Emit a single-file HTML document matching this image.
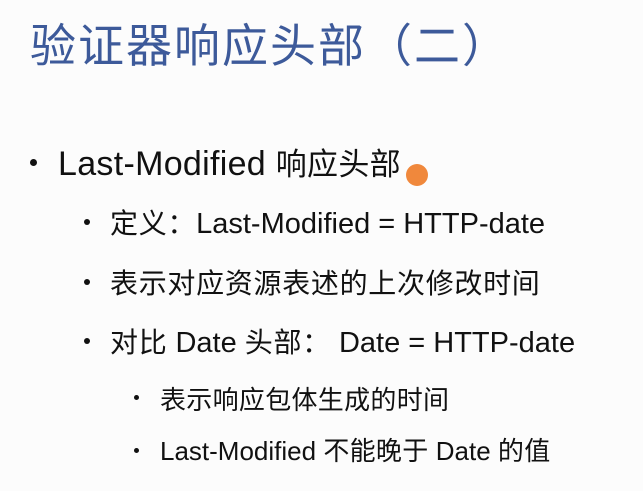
<!DOCTYPE html>
<html><head><meta charset="utf-8"><style>
body{margin:0;width:643px;height:491px;background:#fcfcfc;overflow:hidden;position:relative;font-family:"Liberation Sans","Noto Sans CJK SC",sans-serif;color:#111}
.t{position:absolute;white-space:nowrap;line-height:1}
.title{left:30px;top:23px;font-size:46px;color:#3d5a9a;letter-spacing:2px}
.b{position:absolute;border-radius:50%;background:#111}
.l2{font-size:29px;left:110px}
.l2 .c{font-size:28px;letter-spacing:0.7px}
.l3{font-size:26px;left:160px;letter-spacing:0px}
.l3 .c{font-size:26px;letter-spacing:0.3px}
</style></head><body>
<div class="t title">验证器响应头部（二）</div>

<div class="b" style="left:30px;top:159px;width:7px;height:7px"></div>
<div class="t" style="left:58px;top:147px;font-size:34px;letter-spacing:0.3px">Last-Modified <span style="font-size:31px">响应头部</span></div>
<div style="position:absolute;left:406px;top:164px;width:22px;height:22px;border-radius:50%;background:#f0883c"></div>

<div class="b" style="left:84px;top:219px;width:6px;height:6px"></div>
<div class="t l2" style="top:210px"><span class="c">定义：</span>Last-Modified = HTTP-date</div>
<div class="b" style="left:84px;top:279px;width:6px;height:6px"></div>
<div class="t l2" style="top:270px"><span class="c">表示对应资源表述的上次修改时间</span></div>
<div class="b" style="left:84px;top:338px;width:6px;height:6px"></div>
<div class="t l2" style="top:329px"><span class="c">对比</span> Date <span class="c">头部：</span>&nbsp;Date = HTTP-date</div>

<div class="b" style="left:134px;top:395px;width:5px;height:5px"></div>
<div class="t l3" style="top:387px"><span class="c">表示响应包体生成的时间</span></div>
<div class="b" style="left:134px;top:448px;width:5px;height:5px"></div>
<div class="t l3" style="top:438px">Last-Modified <span class="c">不能晚于</span> Date <span class="c">的值</span></div>
</body></html>
